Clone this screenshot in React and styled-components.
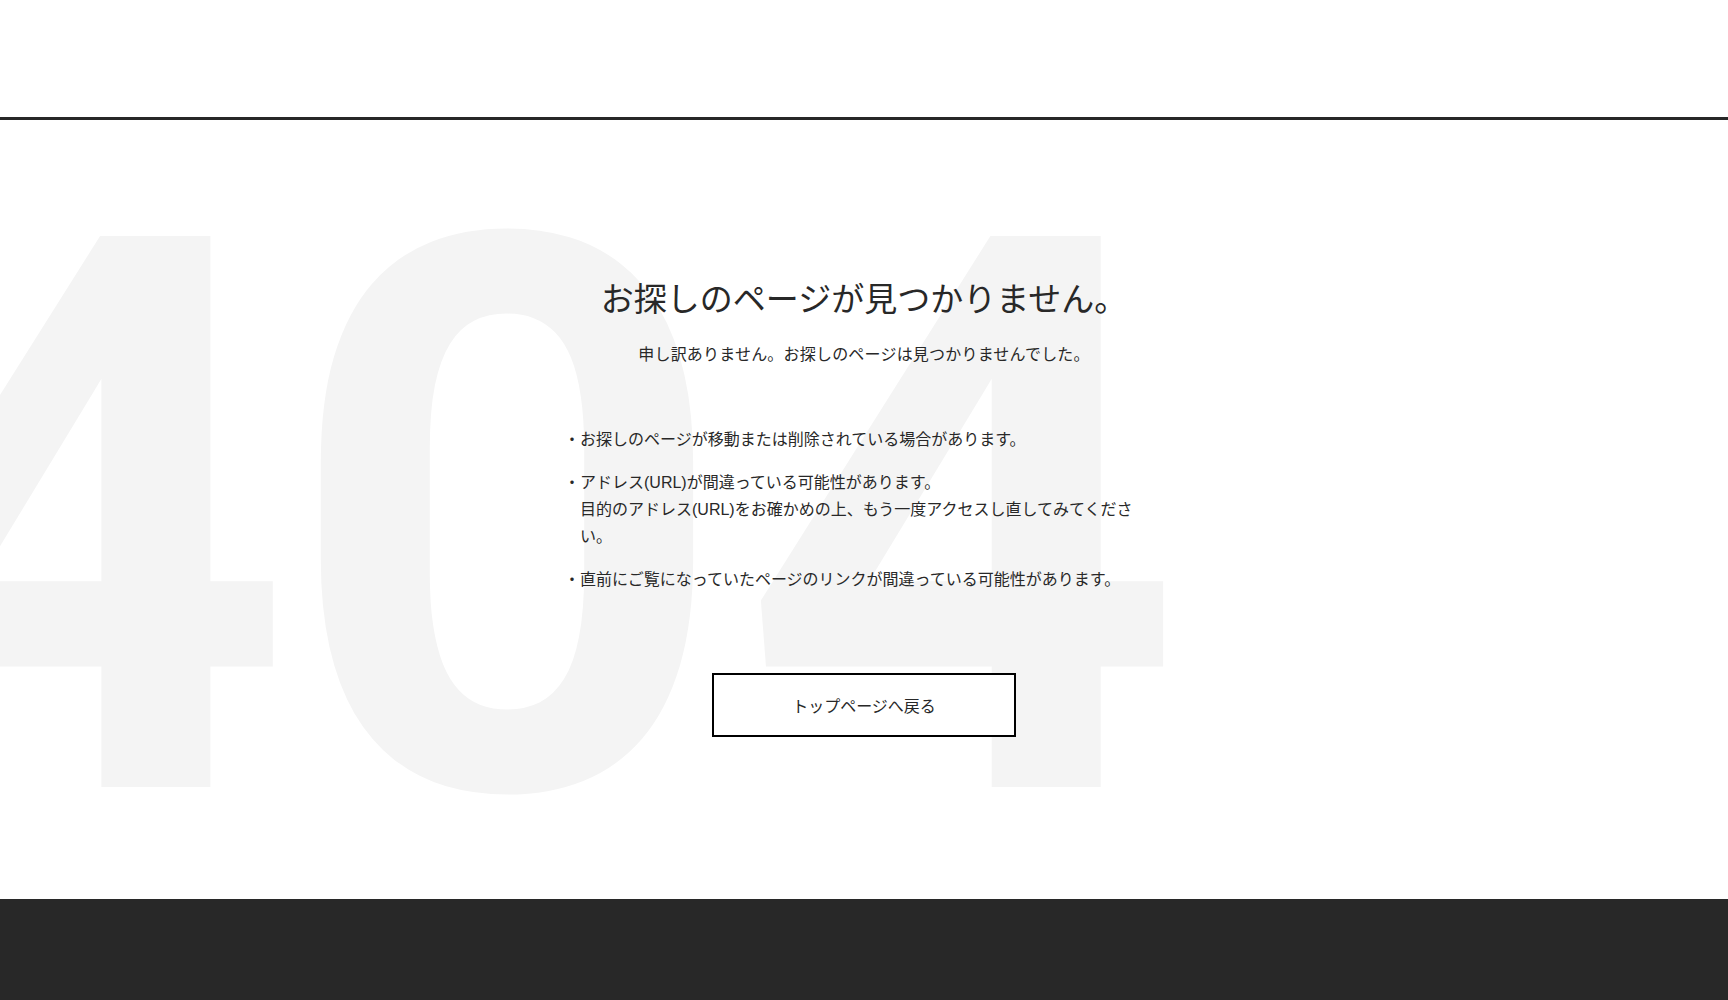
import React from 'react'
import styled, { createGlobalStyle } from 'styled-components'

const GlobalStyle = createGlobalStyle`
  * { box-sizing: border-box; }
  html, body { margin: 0; padding: 0; background: #fff; }
  body {
    font-family: "Liberation Sans", "Noto Sans CJK JP", sans-serif;
    color: #282828;
    overflow-x: hidden;
  }
`

// header bar with the thick bottom rule
export const Header = styled.header`
  height: 120px;
  background: #fff;
  border-bottom: 3px solid #282828;
`

export const Main = styled.main`
  position: relative;
  overflow: hidden;
  padding: 156px 0 162px;
`

// big faded 404 sitting behind the message
export const BigNumber = styled.div`
  position: absolute;
  top: 15px;
  left: -151px;
  font-family: Roboto, "Liberation Sans", sans-serif;
  font-weight: 700;
  font-size: 775px;
  line-height: 1;
  letter-spacing: 10px;
  color: #f4f4f4;
  white-space: nowrap;
  user-select: none;
  pointer-events: none;
`

// the leading 4 sits a bit tighter to the 0
export const Tight = styled.span`
  margin-right: -19px;
`

export const Content = styled.div`
  position: relative;
  width: 600px;
  margin: 0 auto;
  display: flex;
  flex-direction: column;
  align-items: center;
`

export const Title = styled.h1`
  margin: 0;
  font-size: 33px;
  font-weight: 400;
  line-height: 48px;
  text-align: center;
`

export const Lead = styled.p`
  margin: 17px 0 0;
  font-size: 16px;
  line-height: 27px;
  letter-spacing: 0.2px;
  text-align: center;
`

export const Notes = styled.ul`
  align-self: flex-start;
  width: 574px;
  margin: 58px 0 0;
  padding: 0;
  list-style: none;
`

export const Note = styled.li`
  font-size: 16px;
  line-height: 27px;
  padding-left: 1em;
  text-indent: -1em;
  margin-top: ${props => props.first ? '0' : '16px'};
`

export const BackButton = styled.a`
  display: flex;
  align-items: center;
  justify-content: center;
  width: 304px;
  height: 64px;
  margin-top: 80px;
  border: 2px solid #000;
  background: #fff;
  color: #282828;
  font-size: 16px;
  text-decoration: none;
`

export const Footer = styled.footer`
  height: 240px;
  background: #282828;
`

export default function App() {
  return (
    <>
      <GlobalStyle />
      <Header />
      <Main>
        <BigNumber aria-hidden="true"><Tight>4</Tight>04</BigNumber>
        <Content>
          <Title>お探しのページが見つかりません。</Title>
          <Lead>申し訳ありません。お探しのページは見つかりませんでした。</Lead>
          <Notes>
            <Note first>・お探しのページが移動または削除されている場合があります。</Note>
            <Note>
              ・アドレス(URL)が間違っている可能性があります。<br />
              目的のアドレス(URL)をお確かめの上、もう一度アクセスし直してみてください。
            </Note>
            <Note>・直前にご覧になっていたページのリンクが間違っている可能性があります。</Note>
          </Notes>
          <BackButton href="#">トップページへ戻る</BackButton>
        </Content>
      </Main>
      <Footer />
    </>
  )
}
